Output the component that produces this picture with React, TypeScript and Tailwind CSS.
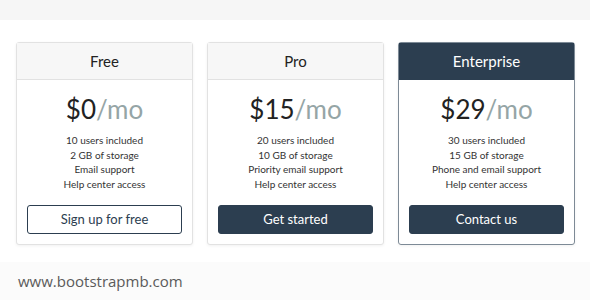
import React from "react";

type Plan = {
  name: string;
  price: number;
  features: string[];
  cta: string;
  featured?: boolean;
  outline?: boolean;
};

const PLANS: Plan[] = [
  {
    name: "Free",
    price: 0,
    features: ["10 users included", "2 GB of storage", "Email support", "Help center access"],
    cta: "Sign up for free",
    outline: true,
  },
  {
    name: "Pro",
    price: 15,
    features: ["20 users included", "10 GB of storage", "Priority email support", "Help center access"],
    cta: "Get started",
  },
  {
    name: "Enterprise",
    price: 29,
    features: ["30 users included", "15 GB of storage", "Phone and email support", "Help center access"],
    cta: "Contact us",
    featured: true,
  },
];

function PlanCard({ plan }: { plan: Plan }) {
  return (
    <div
      className={
        "flex flex-col rounded-[3px] bg-white border shadow-[0_1px_3px_rgba(0,0,0,0.06)] " +
        (plan.featured ? "border-[#7d8a96]" : "border-[#e2e2e2]")
      }
    >
      <div
        className={
          "h-[37px] flex items-center justify-center text-[15px] border-b " +
          (plan.featured
            ? "bg-[#2c3e50] text-white border-[#2c3e50]"
            : "bg-[#f7f7f7] text-[#222] border-[#e2e2e2]")
        }
      >
        {plan.name}
      </div>
      <div className="flex flex-col items-center px-[10px] pb-[10px]">
        <div className="mt-[12px] h-[34px] leading-[34px] text-[26px] text-[#222]">
          ${plan.price}
          <span className="text-[#95a5a6]">/mo</span>
        </div>
        <ul className="mt-[7px] text-[10px] leading-[14.5px] text-[#333] text-center">
          {plan.features.map((f) => (
            <li key={f}>{f}</li>
          ))}
        </ul>
        <button
          className={
            "mt-[14px] w-full h-[29px] rounded-[3px] text-[13px] border " +
            (plan.outline
              ? "bg-white text-[#2c3e50] border-[#2c3e50]"
              : "bg-[#2c3e50] text-white border-[#2c3e50]")
          }
        >
          {plan.cta}
        </button>
      </div>
    </div>
  );
}

export default function App() {
  return (
    <div className="w-[590px] h-[300px] bg-white flex flex-col font-['Lato',sans-serif]">
      <div className="h-[20px] bg-[#f6f6f6]" />
      <div className="grid grid-cols-3 gap-[14px] px-[16px] pt-[22px] pr-[15px]">
        {PLANS.map((p) => (
          <PlanCard key={p.name} plan={p} />
        ))}
      </div>
      <div className="mt-auto h-[38px] bg-[#fbfbfb] flex items-center pl-[18px] text-[15px] text-[#5a5a5a] font-['Open_Sans',sans-serif]">
        www.bootstrapmb.com
      </div>
    </div>
  );
}
